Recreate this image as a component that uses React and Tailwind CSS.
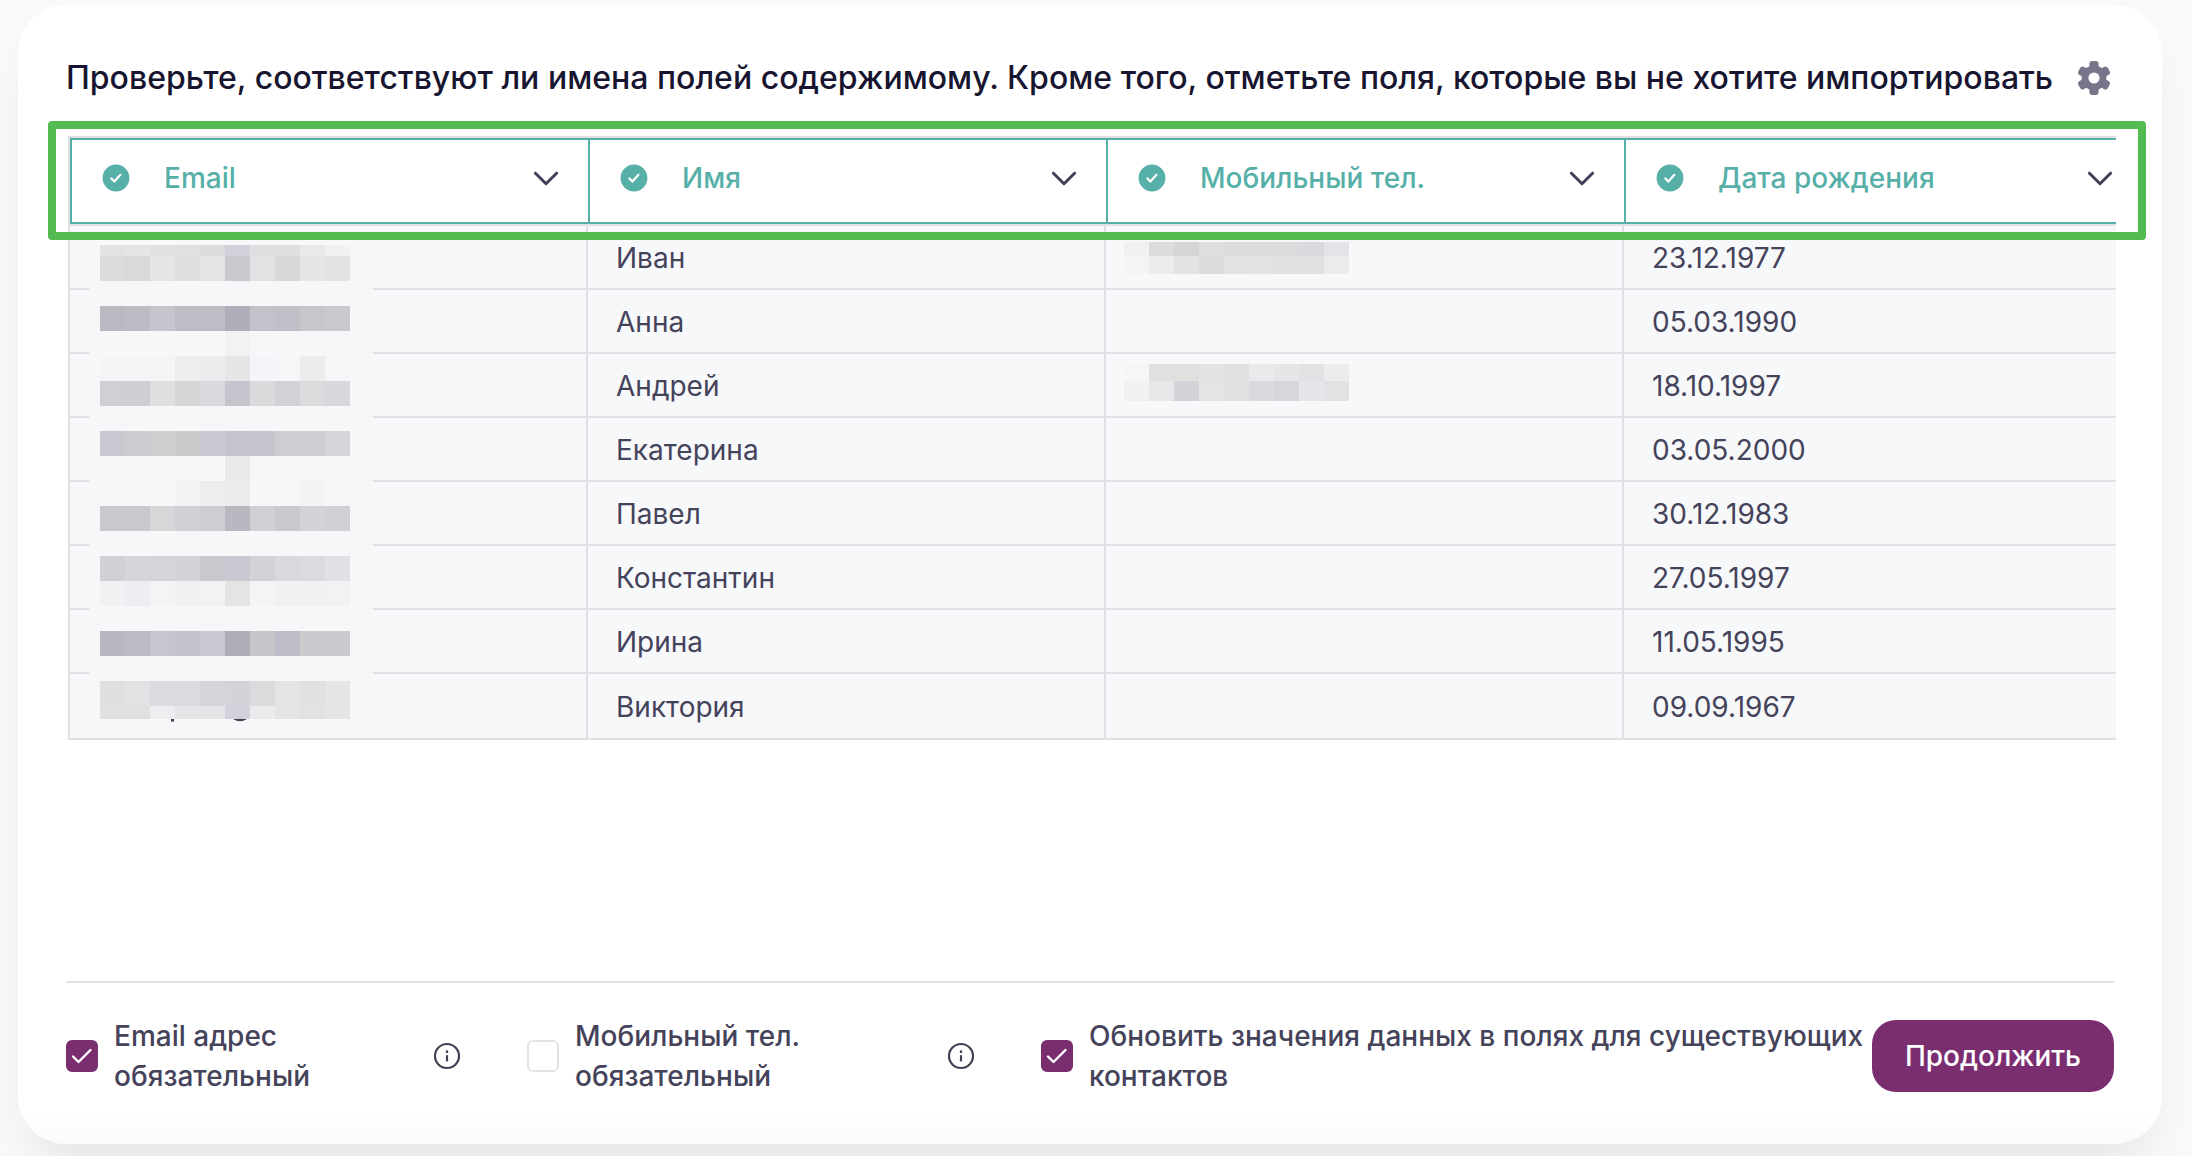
import { useState } from 'react';

const COLUMNS = ['Email', 'Имя', 'Мобильный тел.', 'Дата рождения'];

const ROWS = [
  { name: 'Иван', birthday: '23.12.1977' },
  { name: 'Анна', birthday: '05.03.1990' },
  { name: 'Андрей', birthday: '18.10.1997' },
  { name: 'Екатерина', birthday: '03.05.2000' },
  { name: 'Павел', birthday: '30.12.1983' },
  { name: 'Константин', birthday: '27.05.1997' },
  { name: 'Ирина', birthday: '11.05.1995' },
  { name: 'Виктория', birthday: '09.09.1967' },
];

// Pixelated strips that hide the personal data: [height, ...cell colors]
const EMAIL_MOSAIC = [
  [11, '#e3e3e5', '#e5e5e7', '#e1e1e3', '#e0e0e2', '#dcdcdf', '#d2d2da', '#dedee1', '#dfdfe1', '#e9e9eb', '#f1f1f3'],
  [25, '#dcdcde', '#d9d9db', '#e5e5e7', '#dfdfe1', '#e4e4e7', '#c8c8cf', '#e2e2e5', '#d8d8da', '#e6e6e8', '#e3e3e5'],
  [25],
  [25, '#b9b9c2', '#bcbcc5', '#c5c5ce', '#bdbdc6', '#bdbdc6', '#afafb9', '#c2c2cb', '#c0c0c9', '#c6c6cb', '#cacace'],
  [25, '', '', '', '', '', '#f1f2f4', '', '', '', ''],
  [25, '#f4f5f7', '#f4f5f7', '#f4f5f7', '#ecedef', '#ebecee', '#e6e6e9', '#f4f5f8', '#f5f6f8', '#ebecee', '#f5f6f8'],
  [25, '#cfcfd5', '#cecfd5', '#dfdfe2', '#d6d6d9', '#d9d9df', '#c5c5ce', '#dadadd', '#d1d1d6', '#dbdbde', '#d7d7dc'],
  [25],
  [25, '#c8c8d0', '#cbcbd0', '#cececf', '#cbcbce', '#c9c9d1', '#c4c4cd', '#c5c5ce', '#cdcdd2', '#cfcfd3', '#d6d6da'],
  [25, '', '', '', '', '', '#e8e9ea', '', '', '', ''],
  [25, '', '', '', '#f2f3f5', '#ecedee', '#ebebed', '', '', '#f2f3f5', ''],
  [25, '#c8c8ce', '#c9c9cd', '#d7d7d9', '#cfcfd5', '#cdcdd4', '#b8b8c1', '#d0d0d6', '#cacace', '#d3d3d8', '#d1d1d5'],
  [25],
  [25, '#d0d0d5', '#d5d5da', '#d4d4d9', '#d3d3d8', '#c9c9cd', '#c9c9d3', '#d2d2d7', '#d8d8dd', '#dadadf', '#e1e1e5'],
  [25, '#f1f1f3', '#eeeef2', '#f3f4f6', '#f0f1f3', '#f1f2f4', '#e4e4e6', '#f3f4f6', '#f0f1f3', '#f0f1f3', '#f1f2f4'],
  [25],
  [25, '#b8b8c3', '#bbbbc5', '#c6c6ce', '#c3c3cd', '#c9c9d1', '#aeaeb8', '#c5c5ca', '#bdbdc7', '#cbcbcf', '#cacacf'],
  [25],
  [25, '#dfdfe1', '#e2e2e4', '#dadae0', '#dbdbdf', '#d6d6da', '#d3d3d9', '#dbdbde', '#e4e4e6', '#e1e1e3', '#e6e6e8'],
  [13, '#e1e1e3', '#e0e0e3', '#eeeef0', '#e4e4e6', '#e4e4e7', '#d2d2dc', '#ebebed', '#e4e4e6', '#e2e2e4', '#e5e5e7'],
];

const PHONE_MOSAICS = {
  0: [
    [14, '#f1f1f2', '#dcdcde', '#d5d5d7', '#dedee0', '#dcdcde', '#dbdbdd', '#dbdbdd', '#d9d9df', '#e4e4e8'],
    [18, '#f4f4f5', '#ececed', '#e2e3e4', '#dddddf', '#e1e2e3', '#e2e3e4', '#e0e1e2', '#e0e1e2', '#ebebed'],
  ],
  2: [
    [17, '#f6f6f8', '#e1e1e2', '#e0e0e1', '#e3e3e4', '#e0e1e2', '#e9eaeb', '#e5e6e7', '#e1e2e3', '#ebecee'],
    [20, '#f1f1f3', '#e8e8eb', '#d3d4da', '#e4e4e6', '#dfe0e2', '#d9dadd', '#d6d7dc', '#e5e6ea', '#e2e2e4'],
  ],
};

function Mosaic({ rows }) {
  return (
    <div aria-hidden="true">
      {rows.map(([height, ...cells], i) => (
        <div key={i} className="flex" style={{ height }}>
          {cells.map((color, j) => (
            <span key={j} className="w-[25px]" style={{ backgroundColor: color || undefined }} />
          ))}
        </div>
      ))}
    </div>
  );
}

function GearIcon() {
  return (
    <svg viewBox="-17 -17 34 34" className="size-[34px]" fill="#77758a" aria-hidden="true">
      <circle r="12.4" />
      <rect x="-4.6" y="-17" width="9.2" height="34" rx="3" />
      <rect x="-4.6" y="-17" width="9.2" height="34" rx="3" transform="rotate(60)" />
      <rect x="-4.6" y="-17" width="9.2" height="34" rx="3" transform="rotate(120)" />
      <circle r="5.6" fill="#fff" />
    </svg>
  );
}

function InfoIcon() {
  return (
    <svg viewBox="0 0 28 28" className="size-7" fill="none" stroke="#424056" aria-hidden="true">
      <circle cx="14" cy="14" r="12" strokeWidth="2.2" />
      <path d="M14 13.2v6.2" strokeWidth="2.2" />
      <path d="M14 8.4v2.6" strokeWidth="2.2" />
    </svg>
  );
}

function ColumnSelect({ name }) {
  const [value, setValue] = useState(name);

  return (
    <div className="relative -mr-0.5 h-[86px] border-y-2 border-l-2 border-[#56b0a8] bg-white">
      <select
        aria-label={`Поле: ${name}`}
        value={value}
        onChange={(e) => setValue(e.target.value)}
        className="h-full w-full appearance-none bg-transparent pb-1.5 pl-[92px] text-[28px] font-medium text-[#56b0a8] outline-none"
      >
        {COLUMNS.map((c) => (
          <option key={c}>{c}</option>
        ))}
      </select>
      <svg viewBox="0 0 28 28" className="pointer-events-none absolute top-6 left-[30px] size-7" aria-hidden="true">
        <circle cx="14" cy="14" r="13.4" fill="#56b0a8" />
        <path d="M9.4 14.4l3 3.2 6-6.8" fill="none" stroke="#fff" strokeWidth="2.2" strokeLinecap="round" strokeLinejoin="round" />
      </svg>
      <svg viewBox="0 0 28 28" className="pointer-events-none absolute top-6 right-7 size-7" aria-hidden="true">
        <path d="M3.4 9.2L14 19.8 24.6 9.2" fill="none" stroke="#424056" strokeWidth="3" strokeLinecap="round" strokeLinejoin="round" />
      </svg>
    </div>
  );
}

function Option({ id, label, defaultChecked, info, className, labelClass = '' }) {
  return (
    <div className={`flex items-center gap-4 ${className}`}>
      <span className="relative size-8 flex-none">
        <input
          id={id}
          type="checkbox"
          defaultChecked={defaultChecked}
          className="peer block size-8 appearance-none rounded-[6px] border-2 border-[#e3e3e5] bg-white checked:border-[#7a2e70] checked:bg-[#7a2e70]"
        />
        <svg viewBox="0 0 32 32" className="pointer-events-none absolute inset-0 hidden size-8 peer-checked:block" aria-hidden="true">
          <path d="M7 16.500l5.500 5.500L24.500 10" fill="none" stroke="#fff" strokeWidth="2.400" strokeLinecap="round" strokeLinejoin="round" />
        </svg>
      </span>
      <label htmlFor={id} className={`text-[28px] leading-10 font-medium text-[#45435a] ${labelClass}`}>
        {label}
      </label>
      {info && (
        <button type="button" aria-label="Подробнее" className="ml-auto flex-none">
          <InfoIcon />
        </button>
      )}
    </div>
  );
}

export default function App() {
  return (
    <div className="flex min-h-screen overflow-hidden bg-[#f8f9fb] pt-[5px] pr-[30px] pb-3 pl-[18px] font-['Inter',sans-serif]">
      <main className="flex min-w-0 flex-1 flex-col rounded-[48px] bg-linear-to-b from-white from-97% to-[#fafbfc] px-12 pb-12 shadow-[0_32px_48px_-16px_rgba(0,0,0,0.09)]">
        <header className="flex items-center justify-between pt-[49px] pr-[3px]">
          <h1 className="text-[32px] leading-[48px] font-medium whitespace-nowrap text-[#17152f]">
            Проверьте, соответствуют ли имена полей содержимому. Кроме того, отметьте поля, которые вы не хотите импортировать
          </h1>
          <button type="button" aria-label="Настройки" className="flex-none">
            <GearIcon />
          </button>
        </header>

        <section className="relative mt-[34px] -mr-0.5 ml-0.5">
          <div className="overflow-x-auto overflow-y-hidden [scrollbar-width:none]">
            <table className="w-[2072px] table-fixed border-separate border-spacing-0 text-left">
              <thead>
                <tr>
                  {COLUMNS.map((name) => (
                    <th key={name} className="border-y-2 border-[#dfe0e3] p-0 font-medium first:border-l-2 not-first:pl-0.5">
                      <ColumnSelect name={name} />
                    </th>
                  ))}
                </tr>
              </thead>
              <tbody className="text-[28px] leading-10 text-[#45435a]">
                {ROWS.map((row, i) => (
                  <tr
                    key={row.name}
                    className="h-16 last:h-[66px] *:border-b-2 *:border-l-2 *:border-[#dfe0e3] *:bg-[#f7f8fa] *:px-7 *:pt-0.5 *:pb-0"
                  >
                    <td />
                    <td>{row.name}</td>
                    <td className="relative">
                      {PHONE_MOSAICS[i] && (
                        <div className={i === 0 ? 'absolute top-4 left-[18px]' : 'absolute top-2.5 left-[18px]'}>
                          <Mosaic rows={PHONE_MOSAICS[i]} />
                        </div>
                      )}
                    </td>
                    <td>{row.birthday}</td>
                  </tr>
                ))}
              </tbody>
            </table>
          </div>

          {/* Blurred-out email addresses */}
          <div className="absolute top-[109px] left-[21px] w-[284px] bg-[#f6f7f9] px-[11px]">
            <Mosaic rows={EMAIL_MOSAIC} />
            <svg viewBox="0 0 250 4" className="absolute top-full left-[11px] h-1 w-[250px]" aria-hidden="true">
              <rect x="71" y="0" width="3" height="2.6" fill="#424056" />
              <path d="M133 0h14q-7 4.400-14 0z" fill="#424056" />
            </svg>
          </div>

          {/* Highlight around the header row */}
          <div className="pointer-events-none absolute -top-[15px] -right-[30px] -left-5 h-[119px] rounded-[4px] border-8 border-[#54bb53]" />
        </section>

        <footer className="mt-auto flex items-center border-t-2 border-[#dfe0e3] pt-[33px]">
          <Option id="email-required" label="Email адрес обязательный" defaultChecked info className="w-[395px] flex-none" labelClass="w-[220px]" />
          <Option id="phone-required" label="Мобильный тел. обязательный" info className="ml-[66px] w-[448px] flex-none" labelClass="w-[260px]" />
          <Option
            id="update-existing"
            label="Обновить значения данных в полях для существующих контактов"
            defaultChecked
            className="ml-[66px] min-w-0 flex-1"
          />
          <button type="button" className="h-[72px] w-[242px] flex-none rounded-3xl bg-[#7a2e70] text-[28px] font-medium text-white">
            Продолжить
          </button>
        </footer>
      </main>
    </div>
  );
}
